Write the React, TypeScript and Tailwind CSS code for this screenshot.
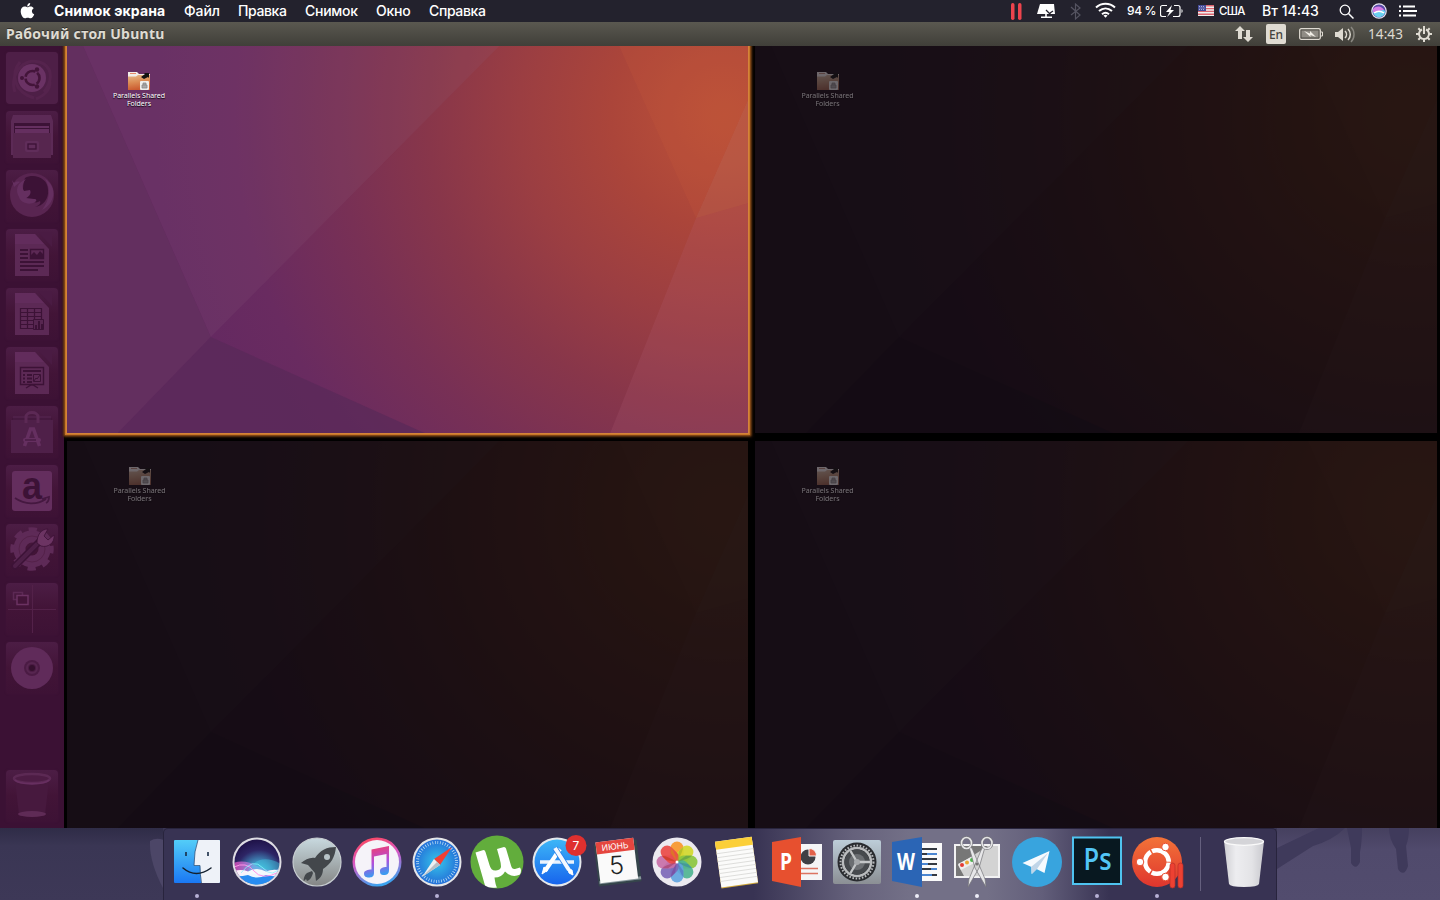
import type { ReactNode } from "react";

const MAC = "font-['Inter','Liberation_Sans',sans-serif]";
const UBU = "font-['Noto_Sans','Open_Sans',sans-serif]";

/* ---------- wallpaper and workspaces ---------- */

function Wallpaper({ id }: { id: string }) {
  return (
    <svg className="block h-full w-full" viewBox="67 46 682 387" preserveAspectRatio="none">
      <defs>
        <radialGradient id={`w${id}`} gradientUnits="userSpaceOnUse" cx="725" cy="115" r="570">
          <stop offset="0" stopColor="#bb5138" />
          <stop offset="0.08" stopColor="#b64d39" />
          <stop offset="0.2" stopColor="#ab453a" />
          <stop offset="0.36" stopColor="#9b3e42" />
          <stop offset="0.52" stopColor="#88364a" />
          <stop offset="0.68" stopColor="#783055" />
          <stop offset="0.86" stopColor="#692b60" />
          <stop offset="1" stopColor="#642961" />
        </radialGradient>
      </defs>
      <rect x="67" y="46" width="682" height="387" fill={`url(#w${id})`} />
      <polygon points="83,46 500,46 211,337" fill="#8c6080" opacity="0.14" />
      <polygon points="67,46 83,46 211,337 118,433 67,433" fill="#632f5f" />
      <polygon points="211,337 425,433 118,433" fill="#582a58" opacity="0.7" />
      <polygon points="620,46 749,46 749,100 697,218" fill="#c8583c" opacity="0.2" />
      <polygon points="749,100 749,433 611,433 697,218" fill="#b8667a" opacity="0.17" />
      <polygon points="749,100 749,203 697,218" fill="#c87840" opacity="0.16" />
    </svg>
  );
}

function SharedFolder() {
  return (
    <div className="flex flex-col items-center">
      <svg width="24" height="22" viewBox="0 0 24 22">
        <defs>
          <linearGradient id="fold" x1="0" y1="0" x2="0.2" y2="1">
            <stop offset="0" stopColor="#e6b88c" />
            <stop offset="0.5" stopColor="#dc8d55" />
            <stop offset="1" stopColor="#cb5b30" />
          </linearGradient>
        </defs>
        <path d="M1 2h9l2 2h11v4H1z" fill="#f2ede9" />
        <path d="M3 3.500h6" stroke="#e58a68" />
        <path d="M1 6.500h8l2-1.500h12v15H1z" fill="url(#fold)" />
        <path d="M14 7l4-3-1-1h5v5l-1-1-4 2z" fill="#111" />
        <rect x="13" y="11" width="9" height="9" rx="1" fill="#eeeeec" />
        <path d="M15 15h5v3h-5zM16 15v-2h3v2" fill="#aaa" stroke="#888" strokeWidth=".8" />
      </svg>
      <div className={`${UBU} whitespace-nowrap text-center text-[7px] leading-[8px] tracking-[-0.03px] text-white [text-shadow:0_1px_1px_#000]`}>
        Parallels Shared
        <br />
        Folders
      </div>
    </div>
  );
}

function Workspace({ id, active }: { id: string; active?: boolean }) {
  return (
    <div className={active ? "relative z-10 h-full w-full shadow-[0_0_0_1px_#d4843a,0_0_0_2px_#c87628,0_0_2px_3px_#a05a1c,0_0_3px_4px_#3a1d0a]" : "relative h-full w-full"}>
      <div className={active ? "h-full w-full" : "h-full w-full brightness-[.25] saturate-[.66]"}>
        <Wallpaper id={id} />
      </div>
      <div className={active ? "absolute left-[39px] top-[24px] w-[66px]" : "absolute left-[39px] top-[24px] w-[67px] opacity-40 saturate-50"}>
        <SharedFolder />
      </div>
    </div>
  );
}

/* ---------- Ubuntu launcher ---------- */

function Tile({ children }: { children: ReactNode }) {
  return (
    <div className="h-[52px] w-[52px] shrink-0 rounded-[4px] bg-linear-to-b from-[#4c1d45] via-[#421437] to-[#3d1235] shadow-[0_0_2px_#42163a]">
      <svg className="block overflow-visible" width="52" height="52" viewBox="0 0 52 52" fill="none">
        {children}
      </svg>
    </div>
  );
}

const L = "#652f60";
const M = "#572650";
const D = "#3c1236";

function Sheet({ children }: { children: ReactNode }) {
  return (
    <>
      <path d="M32 3h14v15z" fill="#4a1b43" />
      <path d="M9 5h20l14 15v27H9z" fill="#5c2955" />
      <path d="M9 5h20l9 10H9z" fill={L} opacity=".6" />
      {children}
    </>
  );
}

function Launcher() {
  return (
    <div className="flex w-16 shrink-0 flex-col gap-[7px] bg-[#3b1134] pl-[6px] pt-[6px]">
      <Tile>
        <rect width="52" height="52" rx="4" fill="#4e1f47" />
        <path d="M9 40C2 20 22 2 38 12c9 6 8 18 0 28M14 10c-10 12-6 30 14 36M44 30c0 8-6 14-14 17" stroke="#5a2752" strokeWidth="3" opacity=".6" />
        <circle cx="26" cy="26" r="14" fill="#6a3264" />
        <circle cx="26.500" cy="26" r="7" stroke="#431439" strokeWidth="2.600" strokeDasharray="12.600 2" strokeDashoffset="6" />
        <g fill="#431439"><circle cx="16" cy="26" r="2" /><circle cx="31" cy="17.500" r="2.200" /><circle cx="31" cy="34.500" r="2.200" /></g>
      </Tile>
      <Tile>
        <path d="M7 4h38l2 6v34H5V10z" fill="#5c2a56" />
        <path d="M8 12h36v10H8z" fill={D} />
        <path d="M9 15h34v2H9zM9 18h34v4H9z" fill={L} />
        <path d="M7 22h38v25H7z" fill="#57264f" />
        <rect x="19" y="30" width="14" height="11" rx="2" fill="#602d5a" />
        <rect x="22" y="33" width="8" height="5" stroke={D} strokeWidth="1.300" />
      </Tile>
      <Tile>
        <circle cx="26" cy="25" r="22" fill="#592551" />
        <path d="M19 8c9-5 23 0 23 12 1 9-5 16-13 17 5-2 6-4 5-6-3 2-6 2-8-1-2 2-7 1-8-2 2 1 4-1 5-3-3-1-6-3-6-6 0-4 1-8 2-11z" fill={D} />
        <path d="M20 9c-4 4-4 9-2 12l6-1c2 4-2 7-4 8l8 1c3 0 3 2 1 3-6 4-15 0-16-5C9 20 11 13 20 9zM39 9c6 10 5 20-3 31 13-6 16-23 3-31zM6 10l2 7 6-5c-2-1-5 0-6 1z" fill={L} />
      </Tile>
      <Tile>
        <Sheet>
          <path d="M14 21h8M14 25h8M14 29h8M14 33h24M14 37h24M14 41h18" stroke={D} strokeWidth="2" />
          <path d="M24.500 20.500h13v9h-13z" stroke={D} strokeWidth="1.400" />
          <path d="M25 29v-3l3-3 3 3 3-4 3 3v4z" fill={D} />
        </Sheet>
      </Tile>
      <Tile>
        <Sheet>
          <path d="M14.500 20.500h21v20h-21zM14 24.500h22M14 28.500h22M14 32.500h22M14 36.500h22M21.500 20v21M28.500 20v21" stroke={D} strokeWidth="1.200" />
          <path d="M27.500 31.500h10v10h-10z" fill={M} stroke={D} />
          <path d="M29 37h2v4h-2zM32 33h2v8h-2zM35 36h2v5h-2z" fill={D} />
        </Sheet>
      </Tile>
      <Tile>
        <Sheet>
          <path d="M14.500 20.500h23v17h-23zM20 41l5-3h2l5 3" stroke={D} strokeWidth="1.400" />
          <path d="M17 24h18M17 28h2M21 28h5M17 31.500h2M21 31.500h5M17 35h2M21 35h5" stroke={D} strokeWidth="1.800" />
          <path d="M27.500 27.500h7v7h-7zM28 34l2-3 1 1 3-4" stroke={D} />
        </Sheet>
      </Tile>
      <Tile>
        <path d="M7 10h38v4h2v33H5V14h2z" fill="#4f2049" />
        <path d="M6 13h40" stroke={D} strokeWidth="1" />
        <path d="M20 17v-6c0-6 12-6 12 0v6" stroke="#5c2955" strokeWidth="3" />
        <path d="M18.500 40l6-17h3l6 17" stroke={L} strokeWidth="3.500" />
        <rect x="17" y="32" width="18" height="4" rx="2" fill={L} />
        <path d="M19 34h11" stroke={D} />
      </Tile>
      <Tile>
        <rect x="6" y="6" width="40" height="40" rx="3" fill="#642e5e" />
        <text x="26" y="33.500" textAnchor="middle" fontFamily="Liberation Sans" fontWeight="700" fontSize="39" textLength="20" lengthAdjust="spacingAndGlyphs" fill={D}>a</text>
        <path d="M9 33c10 7 22 7 31 1M36 34l7-2c0 2-1 5-3 6" stroke="#451840" strokeWidth="1.800" />
      </Tile>
      <Tile>
        <circle cx="26" cy="25" r="12.500" stroke="#5e2a57" strokeWidth="12" />
        <circle cx="26" cy="25" r="19.500" stroke="#5e2a57" strokeWidth="4.500" strokeDasharray="8.300 7.015" strokeDashoffset="4" />
        <circle cx="26" cy="25" r="13" stroke="#542149" strokeWidth="1" />
        <path d="M9 42l25-25" stroke={D} strokeWidth="7" strokeLinecap="round" />
        <path d="M9 42l22-22" stroke="#4d1f47" strokeWidth="4" strokeLinecap="round" />
        <path d="M31 19c0-8 4-14 11-14l-4 7 4 4 6-5c1 8-6 13-13 11z" fill="#6c3463" stroke={D} strokeWidth=".8" />
      </Tile>
      <Tile>
        <path d="M26.500 2v48M2 26.500h48" stroke="#532149" strokeWidth="1" />
        <path d="M7.500 9.500h9v7h-9z" stroke="#5c2954" strokeWidth="1.500" />
        <path d="M11 12.500h11v9H11z" fill="#431438" stroke="#6b3262" strokeWidth="1.500" />
      </Tile>
      <Tile>
        <circle cx="26" cy="26" r="21" fill="#602b5a" />
        <circle cx="26" cy="26" r="8" fill="#4b1b44" />
        <circle cx="26" cy="26" r="5" stroke="#572650" strokeWidth="2" />
        <circle cx="26" cy="26" r="3" fill="#35102e" />
      </Tile>
      <div className="mt-[69px]">
        <Tile>
          <path d="M9 11l4 34h26l4-34z" fill="#47193e" />
          <ellipse cx="26" cy="8.500" rx="18" ry="4.500" fill="#4d1c44" stroke="#5c2954" strokeWidth="2.500" />
          <path d="M9 10c4 5 30 5 34 0" stroke="#672f60" strokeWidth="2" />
          <ellipse cx="26" cy="44" rx="14" ry="3" fill="#5f2b56" />
        </Tile>
      </div>
    </div>
  );
}

/* ---------- top bars ---------- */

function MacBar() {
  return (
    <div className={`relative z-20 flex h-[22px] shrink-0 items-center bg-[#23222d] text-[14px] font-medium leading-[22px] text-white ${MAC}`}>
      <div className="w-[54px] pl-[20px]">
        <svg className="-mt-px block" width="15" height="17" viewBox="0 0 15 17" fill="#fff">
          <path d="M10.200 1C10.400 2.900 8.800 4.600 7.200 4.500 7 2.700 8.500 1.100 10.200 1zM7.400 5.300c.8 0 1.600-.8 3.100-.8 1.400 0 2.500.7 3.200 1.700-2.600 1.600-2.200 5 .5 6.100-.6 1.800-2.100 4-3.600 4-1.100 0-1.600-.6-2.900-.6s-1.800.6-2.900.6C2.900 16.300.7 12.700.7 9.300c0-3 1.900-4.700 3.900-4.700 1.300 0 2.200.7 2.800.7z" />
        </svg>
      </div>
      <div className="flex whitespace-nowrap">
        <span className="w-[130px] font-bold tracking-[0.14px]">Снимок экрана</span>
        <span className="w-[54px] tracking-[-0.1px]">Файл</span>
        <span className="w-[67px] tracking-[-0.4px]">Правка</span>
        <span className="w-[71px] tracking-[-0.25px]">Снимок</span>
        <span className="w-[53px] tracking-[-0.2px]">Окно</span>
        <span className="w-[60px] tracking-[-0.35px]">Справка</span>
      </div>
      <div className="ml-auto flex h-[22px] w-[430px] items-center whitespace-nowrap">
        <svg className="w-[26px] shrink-0" height="22" viewBox="0 0 26 22">
          <rect x="1" y="3" width="3.500" height="17" rx="1.700" fill="#ed444d" />
          <rect x="8" y="3" width="3.500" height="17" rx="1.700" fill="#ed444d" />
        </svg>
        <svg className="w-[34px] shrink-0" height="22" viewBox="0 0 34 22">
          <path d="M4 4h14l1 10H1z" fill="#fff" />
          <path d="M10 14v3M5 17.300h11" stroke="#fff" strokeWidth="1.600" />
          <path d="M10 10l5 5M14 13l3-2" stroke="#23222d" strokeWidth="1.300" fill="none" />
        </svg>
        <svg className="w-[25px] shrink-0" height="22" viewBox="0 0 25 22">
          <path d="M1 7l9 8-4.500 4V4L10 8l-9 7" stroke="#555461" strokeWidth="1.200" fill="none" />
        </svg>
        <svg className="w-[32px] shrink-0" height="22" viewBox="0 0 32 22">
          <path d="M1 7.500c5.500-5 13.500-5 19 0M4 11c4-3.500 9-3.500 13 0M7 14.200c2.200-1.900 4.800-1.900 7 0" stroke="#fff" strokeWidth="2" fill="none" />
          <path d="M8.500 15.500c1.300-1 2.700-1 4 0l-2 2.200z" fill="#fff" />
        </svg>
        <span className="w-[33px] shrink-0 text-[12px] tracking-[-0.4px]">94 %</span>
        <svg className="w-[38px] shrink-0" height="22" viewBox="0 0 38 22">
          <path d="M7 5.500H2.500a2 2 0 0 0-2 2v7a2 2 0 0 0 2 2H6M14 5.500h4a2 2 0 0 1 2 2v7a2 2 0 0 1-2 2h-5" stroke="#fff" fill="none" strokeWidth="1.200" />
          <path d="M12 5l-6 7h3.500L7 17l7-7h-3.500z" fill="#fff" />
          <path d="M21.500 9c1.500.5 1.500 3.500 0 4z" fill="#fff" />
        </svg>
        <svg className="w-[21px] shrink-0" height="22" viewBox="0 0 21 22">
          <rect y="5" width="16" height="11" fill="#eee" />
          <path d="M0 5.800h16M0 8.600h16M0 11.400h16M0 14.200h16" stroke="#dc6570" strokeWidth="1.400" />
          <rect y="5" width="8" height="6" fill="#444c9a" />
          <path d="M1 6.500h6M1.500 8h6M1 9.500h6" stroke="#d8d8ee" strokeWidth=".7" strokeDasharray="1 1" />
        </svg>
        <span className="w-[43px] shrink-0 text-[11.500px] tracking-[-0.6px]">США</span>
        <span className="w-[77px] shrink-0 text-[14px]">Вт 14:43</span>
        <svg className="w-[32px] shrink-0" height="22" viewBox="0 0 32 22">
          <circle cx="6" cy="10" r="4.800" stroke="#fff" strokeWidth="1.300" fill="none" />
          <path d="M9.500 13.500l5 5" stroke="#fff" strokeWidth="1.500" />
        </svg>
        <svg className="w-[28px] shrink-0" height="22" viewBox="0 0 28 22">
          <circle cx="8" cy="11" r="7.800" fill="#e8e6f0" />
          <circle cx="8" cy="11" r="6.600" fill="#5b4aa8" />
          <path d="M1.600 10c4-3 9-1 12.800 1-1 8-11.800 9-12.800-1z" fill="#69d2f0" />
          <path d="M2 9c5-5 10-1 11 1-5 0-6 4-11 2z" fill="#d67be6" />
          <path d="M3 13c3-2 7-2 10 0" stroke="#fff" strokeWidth="1.500" fill="none" />
        </svg>
        <svg className="w-[20px] shrink-0" height="22" viewBox="0 0 20 22">
          <path d="M0 6.500h2M4 6.500h12M0 11h2M4 11h14M0 15.500h2M4 15.500h13" stroke="#fff" strokeWidth="1.800" />
        </svg>
      </div>
    </div>
  );
}

function UbuntuBar() {
  return (
    <div className={`relative z-20 flex h-6 shrink-0 items-center bg-linear-to-b from-[#5a5850] to-[#403f39] pl-[6px] text-[#dfdbd2] ${UBU}`}>
      <span className="whitespace-nowrap text-[14px] font-bold leading-6 tracking-[0.27px] [text-shadow:0_-1px_0_#33322e]">Рабочий стол Ubuntu</span>
      <div className="ml-auto flex w-[205px] items-center">
        <svg className="w-[31px] shrink-0" height="24" viewBox="0 0 31 24" fill="#dfdbd2">
          <path d="M5 4l5 5H7v8H3V9H0zM13 20l-5-5h3V8h4v7h3z" />
        </svg>
        <div className="mr-[13px] h-5 w-5 shrink-0 rounded-[2px] bg-[#dfdbd2] text-center text-[12px] font-medium leading-[21px] text-[#45433e]">En</div>
        <svg className="w-[36px] shrink-0" height="24" viewBox="0 0 36 24">
          <rect x=".7" y="6.700" width="20.600" height="10.600" rx="1.500" fill="none" stroke="#dfdbd2" strokeWidth="1.300" />
          <rect x="2.500" y="8.500" width="17" height="7" fill="#8f8c84" />
          <path d="M22 10h1.500v4H22" stroke="#dfdbd2" fill="none" />
          <path d="M5 9l6 2.500V9l6 6-5.500-2v2z" fill="#f1eee6" />
        </svg>
        <svg className="w-[33px] shrink-0" height="24" viewBox="0 0 33 24" fill="none">
          <path d="M0 10h3l5-4v13l-5-4H0z" fill="#dfdbd2" />
          <path d="M10 9c2 2 2 5 0 7M13 7c3 3 3 8 0 11" stroke="#dfdbd2" strokeWidth="1.500" />
          <path d="M16 5c4 4 4 11 0 15" stroke="#88867f" strokeWidth="1.500" />
        </svg>
        <span className="w-[48px] shrink-0 text-[13.500px] tracking-[0.1px]">14:43</span>
        <svg width="17" height="24" viewBox="0 0 17 24" fill="none" stroke="#dfdbd2">
          <path d="M6 7.500a5 5 0 1 0 4 0" strokeWidth="2" />
          <path d="M8 4v8" strokeWidth="2" />
          <path d="M0 12h3M13 12h3M2.300 6.300l2 2M13.700 6.300l-2 2M2.300 17.700l2-2M13.700 17.700l-2-2M8 17v3" strokeWidth="2" />
        </svg>
      </div>
    </div>
  );
}

/* ---------- dock ---------- */

function DockIcon({ children, dot, light }: { children: ReactNode; dot?: boolean; light?: boolean }) {
  return (
    <svg className="block shrink-0 overflow-visible" width="60" height="72" viewBox="0 0 60 72" fill="none">
      {children}
      {dot && <circle cx="30" cy="68" r="2" fill={light ? "#eeeef8" : "#b8b2d6"} />}
    </svg>
  );
}

const petals = ["#f7962a", "#d3d82e", "#8cc63f", "#4fb491", "#62a4e0", "#7d68b8", "#c86fa8", "#ea4a46"];
const petalShades = ["#d9801f", "#a8b52a", "#5f9e4a", "#3f8f9c", "#5878be", "#7a4a9c", "#a8436e", "#c83a22"];

function Dock() {
  return (
    <div className="flex w-[1114px] shrink-0 rounded-t-[5px] border-x border-t border-[#28243d] bg-[linear-gradient(90deg,#383353_53%,#66627c_62%,#737087_67%,#737087_74%,#625e7a_79%,#383353_85%)] pl-[3px]">
      <div className="-mt-px flex">
        <DockIcon dot>
          <defs>
            <linearGradient id="fi" x2="0" y2="1"><stop stopColor="#53cdf8" /><stop offset="1" stopColor="#1a78f4" /></linearGradient>
          </defs>
          <rect x="7" y="12" width="46" height="43" rx="1" fill="url(#fi)" />
          <path d="M31 12h21a1 1 0 0 1 1 1v41a1 1 0 0 1-1 1H34q-.5-8-1-17H27q0-15 4-26z" fill="#eef2f8" />
          <path d="M31 12q-4 11-4 25.500h6q0 9 1.500 17.500" stroke="#27517c" strokeWidth=".8" />
          <path d="M19 24v4M41 24v4" stroke="#182c45" strokeWidth="1.600" />
          <path d="M16 40q13 11 28 0" stroke="#14202e" strokeWidth="1.500" strokeLinecap="round" />
        </DockIcon>
        <DockIcon>
          <defs>
            <radialGradient id="si" cx=".55" cy=".75" r=".8"><stop stopColor="#4adcf0" /><stop offset=".35" stopColor="#3f86b8" /><stop offset=".65" stopColor="#2d2565" /><stop offset="1" stopColor="#1c0e42" /></radialGradient>
            <linearGradient id="sm"><stop stopColor="#f04fc0" /><stop offset=".5" stopColor="#9a8fe8" /><stop offset="1" stopColor="#d050c8" /></linearGradient>
            <clipPath id="sic"><circle cx="30" cy="34" r="22.500" /></clipPath>
          </defs>
          <circle cx="30" cy="34" r="24.500" fill="#dedde3" />
          <circle cx="30" cy="34" r="22.500" fill="url(#si)" />
          <g clipPath="url(#sic)">
            <path d="M6 35q12-4 24 3t24 2v14H6z" fill="url(#sm)" opacity=".75" />
            <path d="M18 50q10-28 36-14v18H18z" fill="#41d3e8" opacity=".4" />
            <path d="M6 48q24-4 48 0v12H6z" fill="#278cf0" />
            <path d="M6 43q9-2 15 .5 9-5 18 0 8-3 15-.5v5q-7 1-15-1-9 5-18 0-8 2-15 1z" fill="#fff" opacity=".92" />
            <path d="M7 39q12-6 20 4t25 1" stroke="#ff93e8" strokeWidth="1" />
            <path d="M14 45q12-16 22-5t18-2" stroke="#8ef2ff" strokeWidth="1" opacity=".8" />
          </g>
        </DockIcon>
        <DockIcon>
          <defs><linearGradient id="la" x2="0" y2="1"><stop stopColor="#c8d9df" /><stop offset="1" stopColor="#858685" /></linearGradient></defs>
          <circle cx="30" cy="34" r="24" fill="url(#la)" stroke="#c7cdd0" strokeWidth="1.200" />
          <path d="M49 19c-9 0-16 3-21 11-5-1-10 2-14 5l7 2 7 8 1 8c5-3 7-7 7-12 8-5 12-12 13-22z" fill="#43474b" />
          <circle cx="40" cy="29" r="3" fill="#b7c3c7" />
          <path d="M25 43l-5 2c-3 2-4 8-3 8l2-2 1 2c3-1 5-4 6-8z" fill="#43474b" />
        </DockIcon>
        <DockIcon>
          <defs>
            <linearGradient id="it" x1=".2" y1="0" x2=".5" y2="1"><stop stopColor="#fd4658" /><stop offset=".45" stopColor="#d958c5" /><stop offset="1" stopColor="#39a4ef" /></linearGradient>
            <linearGradient id="no" x2=".2" y2="1"><stop stopColor="#f83a60" /><stop offset=".6" stopColor="#b14fdc" /><stop offset="1" stopColor="#3b9af0" /></linearGradient>
          </defs>
          <circle cx="30" cy="34" r="24.500" fill="url(#it)" />
          <circle cx="30" cy="34" r="22" fill="#f5f3f9" />
          <path d="M24.500 21.500L42 18v24c0 4-2 5-5 5s-4-1-4-4 3-4 6.500-4V26L27 28.500V45c0 4-3 4.500-5 4.500-3 0-5-1-5-4s4-4 7.500-4z" fill="url(#no)" />
        </DockIcon>
        <DockIcon dot>
          <defs><radialGradient id="sa"><stop stopColor="#35c4ea" /><stop offset="1" stopColor="#2470d8" /></radialGradient></defs>
          <circle cx="30" cy="34" r="24.500" fill="#e5e6e8" />
          <circle cx="30" cy="34" r="22.500" fill="url(#sa)" />
          <circle cx="30" cy="34" r="19.500" stroke="#c8e5f8" strokeWidth="3" strokeDasharray=".7 1.850" />
          <path d="M45 19L33 37l-6-6z" fill="#f23f35" />
          <path d="M15 49l12-18 6 6z" fill="#edf0f2" />
          <path d="M15 49l18-12-3-3z" fill="#b8bec5" />
        </DockIcon>
        <DockIcon>
          <circle cx="30" cy="34" r="26.500" fill="#62ad3c" />
          <path d="M8.500 24.500l8-2.500q1.500 0 2 2l4 13q1.500 6 6.500 5.500 5-.5 5-4 0-3-1.500-8.500l-2.500-9 7-2q1.500 0 2 1.500l5 17q1 4 4 3.500l5-1.500q2 3 0 7-8 4-15-3-3 6-10.500 6 1 8 2.500 10-8 1-12-2z" fill="#fff" />
        </DockIcon>
        <DockIcon>
          <defs><linearGradient id="as" x2="0" y2="1"><stop stopColor="#3db6f7" /><stop offset="1" stopColor="#1764ed" /></linearGradient></defs>
          <circle cx="30" cy="34" r="24.500" fill="#e5e8ec" />
          <circle cx="30" cy="34" r="22.500" fill="url(#as)" />
          <path d="M13 34h34" stroke="#eaf2fc" strokeWidth="3.500" />
          <path d="M33 21L18 43" stroke="#fff" strokeWidth="4" />
          <path d="M17 39l-2 7 6-4z" fill="#fff" stroke="#fff" />
          <path d="M28 20l14 22" stroke="#2a80e8" strokeWidth="5.500" />
          <path d="M28 20l14 22" stroke="#f5f9ff" strokeWidth="4" />
          <path d="M41 41l4 1 1 5-4-2z" fill="#fff" stroke="#fff" />
          <circle cx="49" cy="17.500" r="10.500" fill="#df302f" />
          <text x="49" y="21.700" textAnchor="middle" fontFamily="Inter" fontSize="12" fill="#fff">7</text>
        </DockIcon>
        <DockIcon>
          <g transform="rotate(-7 30 34)">
            <rect x="9" y="14" width="43" height="42" fill="#35454b" />
            <rect x="10" y="51" width="42" height="3" fill="#88979b" />
            <rect x="11" y="12" width="38" height="41" fill="#fafafa" />
            <rect x="11" y="12" width="38" height="12" fill="#e5463f" />
          </g>
          <text x="28.500" y="21.500" textAnchor="middle" fontFamily="Inter" fontSize="8.500" fill="#fff" transform="rotate(-7 28 22)">ИЮНЬ</text>
          <text x="29.500" y="46" textAnchor="middle" fontFamily="Inter" fontWeight="300" fontSize="25" fill="#222" transform="rotate(-4 30 38)">5</text>
        </DockIcon>
        <DockIcon>
          <circle cx="30" cy="34" r="24.500" fill="#eceaf0" />
          {petals.map((c, i) => (
            <rect key={c} x="23.500" y="13.500" width="13" height="20.500" rx="6.500" fill={c} opacity=".92" transform={`rotate(${i * 45} 30 34)`} />
          ))}
          {petalShades.map((c, i) => (
            <path key={c} d="M30 34L23.700 25V19.500Q26.500 21 30 34z" fill={c} opacity=".7" transform={`rotate(${i * 45} 30 34)`} />
          ))}
          <circle cx="30" cy="34" r="1.500" fill="#fff" />
        </DockIcon>
        <DockIcon>
          <g transform="rotate(-8 30 34)">
            <rect x="11" y="12" width="37" height="46" fill="#d1a83a" />
            <rect x="11" y="11" width="37" height="46" fill="#fbfbfa" />
            <rect x="11" y="11" width="37" height="8" fill="#fbcf38" />
            <path d="M11 23h37M11 27h37M11 31h37M11 35h37M11 39h37M11 43h37M11 47h37M11 51h37" stroke="#d8d8d6" strokeWidth=".8" />
          </g>
        </DockIcon>
        <DockIcon>
          <rect x="29" y="16" width="26" height="36" fill="#f5f5f6" />
          <circle cx="41" cy="29" r="7.500" fill="#3f4045" />
          <path d="M42 28v-7.500a7 7 0 0 1 7.500 7.500z" fill="#e2614a" stroke="#f5f5f6" />
          <path d="M34 40.500h17M34 45.500h17" stroke="#dc7462" strokeWidth="1.600" />
          <path d="M5 14l29-5v50L5 53z" fill="#e7502f" />
          <text x="19" y="42" textAnchor="middle" fontFamily="Open Sans" fontWeight="700" fontSize="24" fill="#fff" textLength="12" lengthAdjust="spacingAndGlyphs">P</text>
        </DockIcon>
        <DockIcon>
          <defs><linearGradient id="sp" x2="0" y2="1"><stop stopColor="#bdcdd8" /><stop offset="1" stopColor="#8b8f94" /></linearGradient></defs>
          <rect x="6" y="12" width="48" height="44" rx="2" fill="url(#sp)" />
          <circle cx="30" cy="34" r="19.500" fill="#292b2f" />
          <circle cx="30" cy="34" r="16.500" stroke="#b7b9bb" strokeWidth="2" strokeDasharray="1.600 1.600" />
          <circle cx="30" cy="34" r="14" stroke="#b9bbbd" strokeWidth="2.600" />
          <circle cx="30" cy="34" r="12.500" fill="#46494d" />
          <circle cx="30" cy="34" r="8" fill="#6b6e72" />
          <path d="M30 34h13M30 34l-6.500-11M30 34l-6.500 11" stroke="#c3c5c7" strokeWidth="2.300" />
          <circle cx="30" cy="34" r="3" fill="#a5a8ab" />
        </DockIcon>
        <DockIcon dot light>
          <rect x="30" y="15" width="25" height="38" fill="#fafafa" />
          <path d="M34 21h16M34 26h16M34 31h16M34 36h16M34 41h16M34 47h16" stroke="#343941" strokeWidth="1.800" />
          <path d="M40 26h10M34 36h7M44 41h6M34 47h11" stroke="#4b86d1" strokeWidth="1.800" />
          <path d="M5 14l30-5v50L5 53z" fill="#2b65b5" />
          <text x="19" y="42" textAnchor="middle" fontFamily="Open Sans" fontWeight="700" fontSize="23" fill="#fff" textLength="18" lengthAdjust="spacingAndGlyphs">W</text>
        </DockIcon>
        <DockIcon dot light>
          <rect x="7" y="16" width="46" height="34" fill="#f2f2f3" />
          <rect x="9" y="18" width="42" height="30" fill="#777" />
          <path d="M11 37l30-19h10v30H17z" fill="#d3d3d3" />
          <path d="M11 36l17-9 3 6-17 9z" fill="#eee" />
          <circle cx="15" cy="37" r="2" fill="#e53c34" /><circle cx="20" cy="34.500" r="2" fill="#eaa632" /><circle cx="25" cy="32" r="2" fill="#4bb64b" />
          <path d="M22 19l3 1 13 31 1 8-11-19zM38 19l-3 1-13 31-1 8 11-19z" fill="#e7e7e9" stroke="#747479" strokeWidth=".7" />
          <ellipse cx="19.500" cy="15" rx="5" ry="5.500" stroke="#77777c" strokeWidth="2.800" /><ellipse cx="19.500" cy="15" rx="5" ry="5.500" stroke="#e5e5e7" strokeWidth="1.600" />
          <ellipse cx="40" cy="15" rx="5" ry="5.500" stroke="#77777c" strokeWidth="2.800" /><ellipse cx="40" cy="15" rx="5" ry="5.500" stroke="#e5e5e7" strokeWidth="1.600" />
          <circle cx="30" cy="36" r="1.500" fill="#777" />
        </DockIcon>
        <DockIcon>
          <circle cx="30" cy="34" r="25" fill="#38a4de" />
          <path d="M15.500 35l27-12-5 22-8-4-5 5v-7z" fill="#f6fafe" />
          <path d="M24 39l17-14-11 16-5 5z" fill="#c0d5e8" />
        </DockIcon>
        <DockIcon dot>
          <rect x="6" y="9.500" width="48" height="46.500" fill="#081820" stroke="#4fc3f0" strokeWidth="2" />
          <text x="30.500" y="42" textAnchor="middle" fontFamily="Open Sans" fontWeight="600" fontSize="30" fill="#52c5f6" textLength="28" lengthAdjust="spacingAndGlyphs">Ps</text>
        </DockIcon>
        <DockIcon dot>
          <defs><linearGradient id="ub" x2="0" y2="1"><stop stopColor="#f37338" /><stop offset="1" stopColor="#df352e" /></linearGradient></defs>
          <circle cx="30" cy="34" r="25" fill="url(#ub)" />
          <circle cx="30" cy="34" r="11.800" stroke="#fff" strokeWidth="4.500" strokeDasharray="23.200 1.500" strokeDashoffset="-.75" />
          <g fill="#fff" stroke="#e94e32" strokeWidth="1"><circle cx="13" cy="34" r="3.800" /><circle cx="38.500" cy="19" r="3.800" /><circle cx="38.500" cy="49" r="3.800" /></g>
          <rect x="43" y="35" width="5" height="25" rx="2.500" fill="#ed4132" stroke="#b92e28" strokeWidth=".7" />
          <rect x="51" y="35" width="5" height="25" rx="2.500" fill="#ed4132" stroke="#b92e28" strokeWidth=".7" />
        </DockIcon>
      </div>
      <div className="ml-[13px] mt-2 h-[54px] w-px bg-[#65607e]" />
      <div className="-mt-px ml-[13px]">
        <DockIcon>
          <defs><linearGradient id="tr"><stop stopColor="#cfcfd3" /><stop offset=".3" stopColor="#ededf0" /><stop offset=".7" stopColor="#e3e3e6" /><stop offset="1" stopColor="#c9c9ce" /></linearGradient></defs>
          <path d="M10 13l5 43q1 3 15 3t15-3l5-43z" fill="url(#tr)" />
          <ellipse cx="30" cy="13.500" rx="19.500" ry="3.800" fill="#d4d4d8" stroke="#fafafa" strokeWidth="1.300" />
        </DockIcon>
      </div>
    </div>
  );
}

export default function App() {
  return (
    <div className="flex h-[900px] w-[1440px] flex-col overflow-hidden bg-black">
      <MacBar />
      <UbuntuBar />
      <div className="flex h-[782px] shrink-0 bg-black">
        <Launcher />
        <div className="grid grid-cols-[681px_682px] grid-rows-[387px_387px] gap-x-[7px] gap-y-[8px] pl-[3px]">
          <Workspace id="a" active />
          <Workspace id="b" />
          <Workspace id="c" />
          <Workspace id="d" />
        </div>
      </div>
      <div className="flex h-[72px] shrink-0 bg-[#3a3654]">
        <svg className="block shrink-0" width="163" height="72" viewBox="0 0 163 72">
          <defs><linearGradient id="dl" x2="0" y2="1"><stop stopColor="#2f2c47" /><stop offset=".25" stopColor="#3a3654" /><stop offset="1" stopColor="#3d3857" /></linearGradient></defs>
          <rect width="163" height="72" fill="url(#dl)" />
          <path d="M150 13q6-4 14-1v50q-15-28-14-49z" fill="#4c4667" />
        </svg>
        <Dock />
        <svg className="block shrink-0" width="163" height="72" viewBox="0 0 163 72">
          <defs><linearGradient id="dr" x2="0" y2="1"><stop stopColor="#45405f" /><stop offset=".3" stopColor="#504a6c" /><stop offset="1" stopColor="#524c6e" /></linearGradient></defs>
          <rect width="163" height="72" fill="url(#dr)" />
          <path d="M0 20L42 0h26Q56 12 36 18L0 41zM70 0h15q0 14-2 24v10q-4 9-9 1V20zM112 0h20q0 10-3 18l2 20q-4 12-10 3l-2-20q-7-10-7-21z" fill="#3f3a5b" />
        </svg>
      </div>
    </div>
  );
}
